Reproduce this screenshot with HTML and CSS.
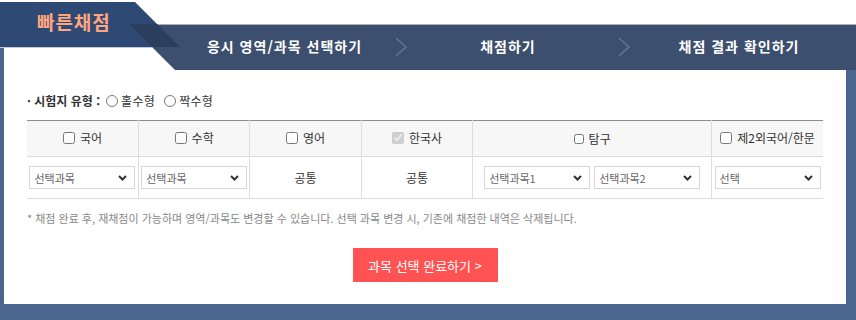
FILE: index.html
```html
<!DOCTYPE html>
<html lang="ko">
<head>
<meta charset="utf-8">
<title>빠른채점</title>
<link rel="stylesheet" href="styles.css">
</head>
<body>
<div class="page">
  <header class="head">
    <svg class="head-bg" width="856" height="70" viewBox="0 0 856 70" aria-hidden="true">
      <polygon points="129,24 856,24 856,70 175,70" fill="#3d4f6e"/>
      <rect x="150" y="24" width="706" height="1" fill="#a9b1be"/>
      <polygon points="0,2 135,2 180,47 0,47" fill="#2e4a74"/>
      <polygon points="129,24 157,24 180,47 152,47" fill="#2c3e5e"/>
      <rect x="0" y="47" width="152" height="1" fill="#c3cad6"/>
    </svg>
    <h1 class="tab-title">빠른채점</h1>
    <ol class="steps">
      <li class="step step-1">응시 영역/과목 선택하기</li>
      <li class="sep sep-1"><svg width="12" height="20" viewBox="0 0 12 20"><polyline points="1,1 11,10 1,19" fill="none" stroke="#66778f" stroke-width="1.5"/></svg></li>
      <li class="step step-2">채점하기</li>
      <li class="sep sep-2"><svg width="12" height="20" viewBox="0 0 12 20"><polyline points="1,1 11,10 1,19" fill="none" stroke="#66778f" stroke-width="1.5"/></svg></li>
      <li class="step step-3">채점 결과 확인하기</li>
    </ol>
  </header>

  <main class="stage">
    <section class="panel">
      <div class="type-row">
        <span class="type-label">· 시험지 유형 :</span>
        <label class="radio"><input type="radio" name="paper"><span>홀수형</span></label>
        <label class="radio"><input type="radio" name="paper"><span>짝수형</span></label>
      </div>

      <table class="subjects">
        <colgroup>
          <col class="c-narrow"><col class="c-narrow"><col class="c-narrow"><col class="c-narrow"><col class="c-wide"><col class="c-narrow">
        </colgroup>
        <thead>
          <tr>
            <th><label class="chk"><input type="checkbox"><span>국어</span></label></th>
            <th><label class="chk"><input type="checkbox"><span>수학</span></label></th>
            <th><label class="chk"><input type="checkbox"><span>영어</span></label></th>
            <th><label class="chk"><input type="checkbox" checked disabled><span>한국사</span></label></th>
            <th><label class="chk chk-small"><input type="checkbox"><span>탐구</span></label></th>
            <th><label class="chk"><input type="checkbox"><span>제2외국어/한문</span></label></th>
          </tr>
        </thead>
        <tbody>
          <tr>
            <td><span class="sel"><select><option>선택과목</option></select><svg class="caret" width="9" height="6" viewBox="0 0 9 6"><polyline points="1,1 4.5,4.5 8,1" fill="none" stroke="#333" stroke-width="2"/></svg></span></td>
            <td><span class="sel"><select><option>선택과목</option></select><svg class="caret" width="9" height="6" viewBox="0 0 9 6"><polyline points="1,1 4.5,4.5 8,1" fill="none" stroke="#333" stroke-width="2"/></svg></span></td>
            <td class="common">공통</td>
            <td class="common">공통</td>
            <td><div class="sel-pair"><span class="sel"><select><option>선택과목1</option></select><svg class="caret" width="9" height="6" viewBox="0 0 9 6"><polyline points="1,1 4.5,4.5 8,1" fill="none" stroke="#333" stroke-width="2"/></svg></span><span class="sel"><select><option>선택과목2</option></select><svg class="caret" width="9" height="6" viewBox="0 0 9 6"><polyline points="1,1 4.5,4.5 8,1" fill="none" stroke="#333" stroke-width="2"/></svg></span></div></td>
            <td><span class="sel"><select><option>선택</option></select><svg class="caret" width="9" height="6" viewBox="0 0 9 6"><polyline points="1,1 4.5,4.5 8,1" fill="none" stroke="#333" stroke-width="2"/></svg></span></td>
          </tr>
        </tbody>
      </table>

      <p class="note">* 채점 완료 후, 재채점이 가능하며 영역/과목도 변경할 수 있습니다. 선택 과목 변경 시, 기존에 채점한 내역은 삭제됩니다.</p>

      <div class="actions">
        <button type="button" class="btn-done">과목 선택 완료하기 &gt;</button>
      </div>
    </section>
  </main>
</div>
</body>
</html>
```

FILE: styles.css
```css
* { box-sizing: border-box; }

html, body {
  margin: 0;
  padding: 0;
  background: #fff;
}

body {
  font-family: "Noto Sans CJK KR", "Noto Sans", sans-serif;
  color: #333;
}

.page {
  width: 856px;
  height: 320px;
  overflow: hidden;
}

/* ---------- header ---------- */
.head {
  position: relative;
  z-index: 1;
  height: 70px;
  display: flex;
}

.head-bg {
  position: absolute;
  left: 0;
  top: 0;
  z-index: -1;
}

.tab-title {
  margin: 9px 0 0;
  padding-left: 37px;
  width: 176px;
  flex: none;
  font-size: 19px;
  line-height: 26px;
  height: 26px;
  font-weight: bold;
  color: #ffa57c;
  letter-spacing: 0.9px;
}

.steps {
  list-style: none;
  margin: 24px 0 0;
  padding: 0;
  height: 46px;
  display: flex;
  align-items: center;
}

.step {
  font-size: 14px;
  font-weight: bold;
  color: #fff;
  text-align: center;
  line-height: 20px;
  margin-top: -3px;
  letter-spacing: 1px;
}

.step-1 { width: 217px; }
.step-2 { width: 200px; }
.step-3 { width: 198px; }

.sep {
  display: flex;
  justify-content: center;
  align-items: center;
  height: 20px;
}
.sep svg { display: block; }
.sep-1 { width: 15px; }
.sep-2 { width: 32px; }

/* ---------- stage ---------- */
.stage {
  margin-top: -22px;
  background: #4a668f;
  padding: 0 10px 16px 4px;
}

.panel {
  background: #fff;
  height: 256px;
  padding: 44px 23px 0;
}

.type-row {
  display: flex;
  align-items: center;
  height: 18px;
  font-size: 12px;
  line-height: 18px;
  color: #333;
  margin-bottom: 10px;
}

.type-label {
  font-weight: bold;
  margin-right: 6px;
}

.radio {
  display: flex;
  align-items: center;
  gap: 3px;
  margin-right: 9px;
  letter-spacing: 0.3px;
}

.radio input {
  width: 12px;
  height: 12px;
  margin: 0;
}

/* ---------- table ---------- */
.subjects {
  width: 100%;
  border-collapse: collapse;
  table-layout: fixed;
  border-top: 1px solid #8c8c8c;
}

.c-narrow { width: 14%; }
.c-wide { width: 30%; }

.subjects th,
.subjects td {
  padding: 0;
  text-align: center;
  vertical-align: middle;
  border-bottom: 1px solid #dcdcdc;
  border-right: 1px solid #dcdcdc;
  font-size: 12px;
  color: #333;
}

.subjects th:last-child,
.subjects td:last-child {
  border-right: none;
}

.subjects th {
  background: #f7f7f7;
  height: 36px;
  font-weight: normal;
}

.subjects td {
  height: 42px;
}

.chk {
  display: inline-flex;
  align-items: center;
  gap: 5px;
  line-height: 16px;
}

.chk input {
  width: 12px;
  height: 12px;
  margin: 0;
}

.chk-small input {
  width: 10px;
  height: 10px;
}

.sel {
  position: relative;
  display: inline-block;
  width: 106px;
  height: 23px;
  vertical-align: middle;
}

.sel select {
  -webkit-appearance: none;
  appearance: none;
  width: 100%;
  height: 100%;
  margin: 0;
  border: 1px solid #d6d6d6;
  border-radius: 0;
  background: #fff;
  padding: 0 0 0 4px;
  font-family: inherit;
  font-size: 11px;
  color: #666;
}

.caret {
  position: absolute;
  right: 8px;
  top: 9px;
}

.sel-pair {
  display: flex;
  justify-content: center;
  gap: 4px;
}

.common {
  color: #333;
}

/* ---------- note & action ---------- */
.note {
  margin: 11px 0 0;
  font-size: 11px;
  line-height: 16px;
  color: #888;
}

.actions {
  display: flex;
  justify-content: center;
  margin-top: 22px;
}

.btn-done {
  width: 145px;
  height: 34px;
  border: none;
  border-radius: 0;
  background: #ff5252;
  color: #fff;
  font-family: inherit;
  font-size: 13px;
  padding: 0;
}
```
